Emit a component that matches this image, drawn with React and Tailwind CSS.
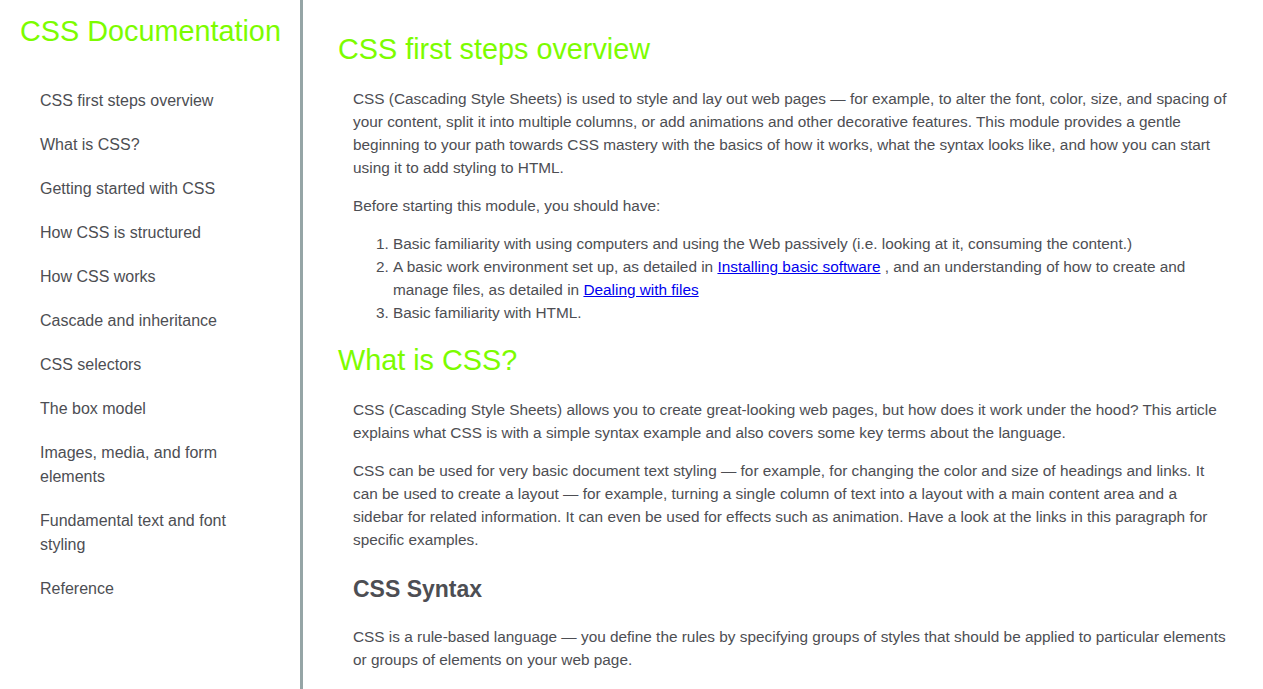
import React from "react";

const nav = [
  "CSS first steps overview",
  "What is CSS?",
  "Getting started with CSS",
  "How CSS is structured",
  "How CSS works",
  "Cascade and inheritance",
  "CSS selectors",
  "The box model",
  "Images, media, and form elements",
  "Fundamental text and font styling",
  "Reference",
];

export default function App() {
  return (
    <div
      className="flex h-screen overflow-hidden bg-white text-[#4d4e53]"
      style={{ fontFamily: '"Liberation Sans", Arial, sans-serif' }}
    >
      <aside className="w-[303px] shrink-0 border-r-[3px] border-[#95a5a6] h-full">
        <h1 className="mt-[15px] pl-[20px] text-[28.8px] leading-[33px] text-[#7cfc00] font-normal">
          CSS Documentation
        </h1>
        <nav className="mt-[41px] pl-[40px] pr-[40px] flex flex-col gap-[20px]">
          {nav.map((n) => (
            <a key={n} className="block text-[16px] leading-[24px] text-[#4d4e53]">
              {n}
            </a>
          ))}
        </nav>
      </aside>
      <main className="flex-1 pl-[35px] pr-[32px] pt-[33px]">
        <h2 className="text-[28.8px] leading-[33px] text-[#7cfc00] font-normal">
          CSS first steps overview
        </h2>
        <div className="pl-[15px] text-[15.36px] leading-[23px]">
          <p className="mt-[21px]">
            CSS (Cascading Style Sheets) is used to style and lay out web pages — for example, to alter the font, color, size, and spacing of your content, split it into multiple columns, or add animations and other decorative features. This module provides a gentle beginning to your path towards CSS mastery with the basics of how it works, what the syntax looks like, and how you can start using it to add styling to HTML.
          </p>
          <p className="mt-[15px]">Before starting this module, you should have:</p>
          <ol className="mt-[15px] list-decimal pl-[40px]">
            <li>
              Basic familiarity with using computers and using the Web passively (i.e. looking at it, consuming the content.)
            </li>
            <li>
              A basic work environment set up, as detailed in{" "}
              <a className="text-[#0000ee] underline">Installing basic software</a> , and an understanding of how to create and manage files, as detailed in{" "}
              <a className="text-[#0000ee] underline">Dealing with files</a>
            </li>
            <li>Basic familiarity with HTML.</li>
          </ol>
        </div>
        <h2 className="mt-[20px] text-[28.8px] leading-[33px] text-[#7cfc00] font-normal">
          What is CSS?
        </h2>
        <div className="pl-[15px] text-[15.36px] leading-[23px]">
          <p className="mt-[21px]">
            CSS (Cascading Style Sheets) allows you to create great-looking web pages, but how does it work under the hood? This article explains what CSS is with a simple syntax example and also covers some key terms about the language.
          </p>
          <p className="mt-[15px]">
            CSS can be used for very basic document text styling — for example, for changing the color and size of headings and links. It can be used to create a layout — for example, turning a single column of text into a layout with a main content area and a sidebar for related information. It can even be used for effects such as animation. Have a look at the links in this paragraph for specific examples.
          </p>
          <h3 className="mt-[24px] text-[23px] leading-[28px] font-bold">CSS Syntax</h3>
          <p className="mt-[22px]">
            CSS is a rule-based language — you define the rules by specifying groups of styles that should be applied to particular elements or groups of elements on your web page.
          </p>
        </div>
      </main>
    </div>
  );
}
